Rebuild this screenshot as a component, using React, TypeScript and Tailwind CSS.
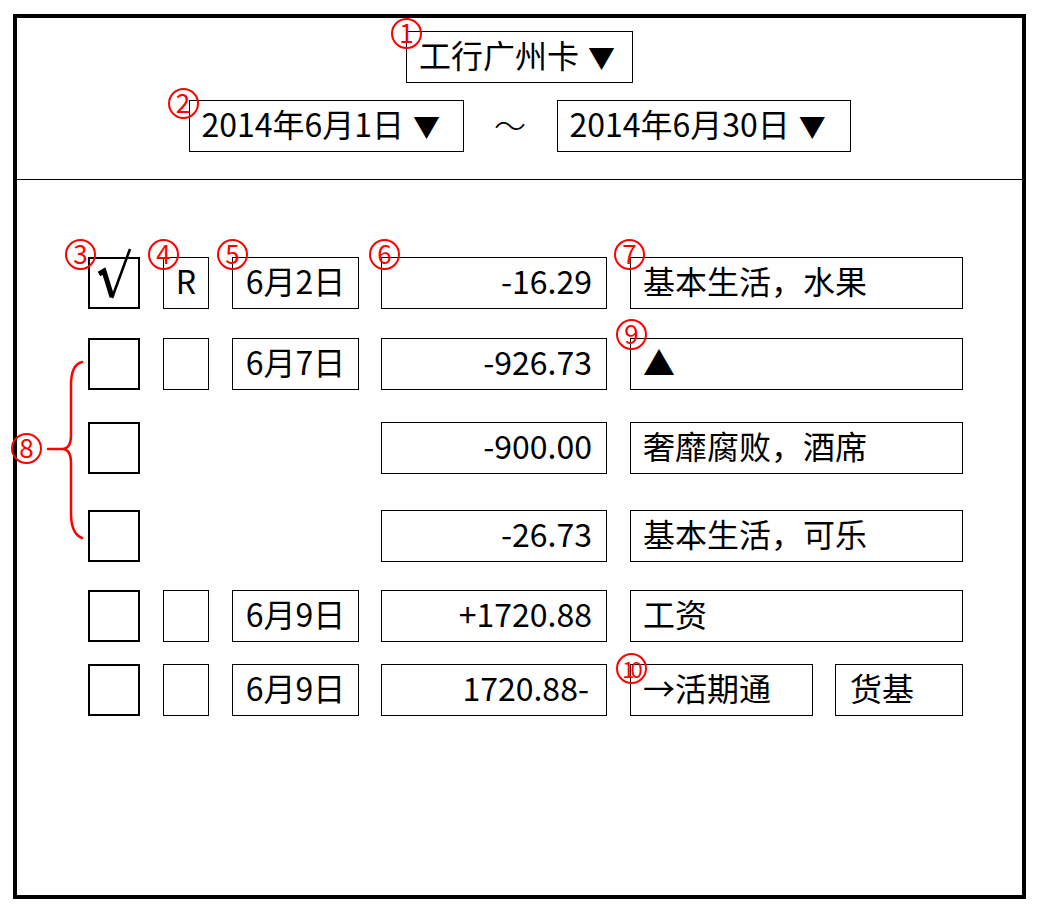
import React from "react";

const FONT = { fontFamily: '"Noto Sans CJK SC", "Noto Sans", sans-serif' };

function Badge({ n, className }: { n: string; className: string }) {
  return (
    <span
      className={
        "absolute z-10 flex h-[31px] w-[31px] items-center justify-center rounded-full border-2 border-[#ff0000] pb-[3px] text-[26px] leading-none text-[#ff0000] " +
        className
      }
    >
      {n}
    </span>
  );
}

function Box({
  w,
  children,
  align = "left",
  badge,
  extra = "",
}: {
  w: string;
  children?: React.ReactNode;
  align?: "left" | "center" | "right";
  badge?: React.ReactNode;
  extra?: string;
}) {
  const a =
    align === "left"
      ? "justify-start pl-[12px]"
      : align === "center"
      ? "justify-center"
      : "justify-end pr-[14px]";
  return (
    <div className={"relative flex h-[52px] shrink-0 items-center border border-black pb-[7px] " + w + " " + a + " " + extra}>
      {badge}
      <span className="whitespace-nowrap text-[32px] leading-none">{children}</span>
    </div>
  );
}

function Arrow() {
  return <span className="ml-[9px] text-[27px]">▼</span>;
}

function Check({ checked, badge }: { checked?: boolean; badge?: React.ReactNode }) {
  return (
    <div className="relative h-[52px] w-[52px] shrink-0 border-2 border-black">
      {badge}
      {checked && (
        <svg className="absolute left-[7px] top-[-12px]" width="36" height="54" viewBox="0 0 36 54" fill="none">
          <path d="M2 27 L7 24 L15 50" stroke="#000" strokeWidth="5" strokeLinejoin="miter" />
          <path d="M15 51 L33 2" stroke="#000" strokeWidth="2.6" />
        </svg>
      )}
    </div>
  );
}

export default function App() {
  return (
    <div className="min-h-[909px] w-[1040px] bg-white text-black" style={FONT}>
      <div className="relative ml-[13px] mt-[14px] h-[885px] w-[1013px] border-4 border-black">
        {/* header */}
        <div className="flex h-[162px] flex-col items-center border-b border-black pt-[13px]">
          <Box w="w-[227px]" badge={<Badge n="1" className="left-[-16px] top-[-14px]" />}>
            工行广州卡<Arrow />
          </Box>
          <div className="mt-[17px] flex items-center">
            <Box w="w-[275px]" badge={<Badge n="2" className="left-[-22px] top-[-13px]" />}>
              2014年6月1日<Arrow />
            </Box>
            <div className="flex w-[93px] justify-center pb-[4px] text-[32px] font-light leading-none">～</div>
            <Box w="w-[294px]">
              2014年6月30日<Arrow />
            </Box>
          </div>
        </div>

        {/* rows */}
        <div className="flex flex-col">
          <div className="mt-[77px] flex pl-[71px]">
            <Check checked badge={<Badge n="3" className="left-[-25px] top-[-20px]" />} />
            <Box w="w-[46px] ml-[23px]" align="center" badge={<Badge n="4" className="left-[-16px] top-[-19px]" />}>
              R
            </Box>
            <Box w="w-[127px] ml-[23px]" align="center" badge={<Badge n="5" className="left-[-16px] top-[-19px]" />}>
              6月2日
            </Box>
            <Box w="w-[226px] ml-[22px]" align="right" badge={<Badge n="6" className="left-[-13px] top-[-19px]" />}>
              -16.29
            </Box>
            <Box w="w-[333px] ml-[23px]" badge={<Badge n="7" className="left-[-17px] top-[-19px]" />}>
              基本生活，水果
            </Box>
          </div>

          <div className="mt-[29px] flex pl-[71px]">
            <Check />
            <Box w="w-[46px] ml-[23px]" align="center" />
            <Box w="w-[127px] ml-[23px]" align="center">
              6月7日
            </Box>
            <Box w="w-[226px] ml-[22px]" align="right">
              -926.73
            </Box>
            <Box w="w-[333px] ml-[23px]" badge={<Badge n="9" className="left-[-15px] top-[-20px]" />}>
              ▲
            </Box>
          </div>

          <div className="mt-[32px] flex pl-[71px]">
            <Check />
            <div className="ml-[219px]" />
            <Box w="w-[226px] ml-[22px]" align="right">
              -900.00
            </Box>
            <Box w="w-[333px] ml-[23px]">奢靡腐败，酒席</Box>
          </div>

          <div className="mt-[36px] flex pl-[71px]">
            <Check />
            <div className="ml-[219px]" />
            <Box w="w-[226px] ml-[22px]" align="right">
              -26.73
            </Box>
            <Box w="w-[333px] ml-[23px]">基本生活，可乐</Box>
          </div>

          <div className="mt-[28px] flex pl-[71px]">
            <Check />
            <Box w="w-[46px] ml-[23px]" align="center" />
            <Box w="w-[127px] ml-[23px]" align="center">
              6月9日
            </Box>
            <Box w="w-[226px] ml-[22px]" align="right">
              +1720.88
            </Box>
            <Box w="w-[333px] ml-[23px]">工资</Box>
          </div>

          <div className="mt-[22px] flex pl-[71px]">
            <Check />
            <Box w="w-[46px] ml-[23px]" align="center" />
            <Box w="w-[127px] ml-[23px]" align="center">
              6月9日
            </Box>
            <Box w="w-[226px] ml-[22px]" align="right" extra="pr-[17px]">
              1720.88-
            </Box>
            <Box
              w="w-[183px] ml-[23px]"
              badge={
                <span className="absolute left-[-15px] top-[-12px] z-10 flex h-[31px] w-[31px] items-center justify-center rounded-full border-2 border-[#ff0000] pb-[2px] pr-[2px] text-[22px] leading-none tracking-[-4px] text-[#ff0000]">
                  10
                </span>
              }
            >
              →活期通
            </Box>
            <Box w="w-[128px] ml-[22px]" extra="pl-[14px]">
              货基
            </Box>
          </div>
        </div>

        {/* annotation 8 + brace */}
        <Badge n="8" className="left-[-6px] top-[415px]" />
        <svg className="absolute left-[13px] top-[337px]" width="60" height="190" viewBox="0 0 60 190" fill="none">
          <path
            d="M52 7 C44 9 41 18 41 30 L41 80 C41 89 38 94 32 94 L18 94 M32 94 C38 94 41 99 41 108 L41 158 C41 170 44 180 52 183"
            stroke="#ff0000"
            strokeWidth="2.5"
            strokeLinecap="round"
          />
        </svg>
      </div>
    </div>
  );
}
